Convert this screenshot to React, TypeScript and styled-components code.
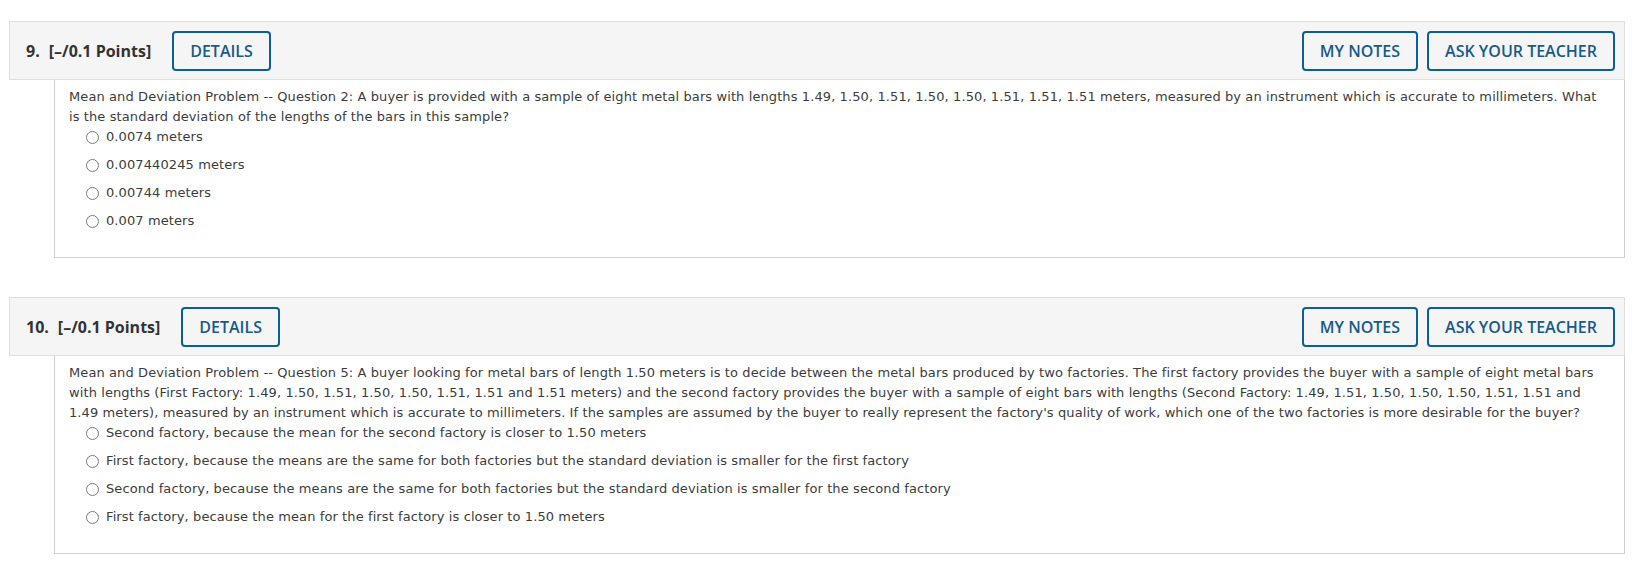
import React from "react";
import styled, { createGlobalStyle } from "styled-components";

interface Question {
  number: number;
  points: string;
  text: string;
  options: string[];
}

const questions: Question[] = [
  {
    number: 9,
    points: "[–/0.1 Points]",
    text: "Mean and Deviation Problem -- Question 2: A buyer is provided with a sample of eight metal bars with lengths 1.49, 1.50, 1.51, 1.50, 1.50, 1.51, 1.51, 1.51 meters, measured by an instrument which is accurate to millimeters. What is the standard deviation of the lengths of the bars in this sample?",
    options: ["0.0074 meters", "0.007440245 meters", "0.00744 meters", "0.007 meters"],
  },
  {
    number: 10,
    points: "[–/0.1 Points]",
    text: "Mean and Deviation Problem -- Question 5: A buyer looking for metal bars of length 1.50 meters is to decide between the metal bars produced by two factories. The first factory provides the buyer with a sample of eight metal bars with lengths (First Factory: 1.49, 1.50, 1.51, 1.50, 1.50, 1.51, 1.51 and 1.51 meters) and the second factory provides the buyer with a sample of eight bars with lengths (Second Factory: 1.49, 1.51, 1.50, 1.50, 1.50, 1.51, 1.51 and 1.49 meters), measured by an instrument which is accurate to millimeters. If the samples are assumed by the buyer to really represent the factory's quality of work, which one of the two factories is more desirable for the buyer?",
    options: [
      "Second factory, because the mean for the second factory is closer to 1.50 meters",
      "First factory, because the means are the same for both factories but the standard deviation is smaller for the first factory",
      "Second factory, because the means are the same for both factories but the standard deviation is smaller for the second factory",
      "First factory, because the mean for the first factory is closer to 1.50 meters",
    ],
  },
];

const GlobalStyle = createGlobalStyle`
  body {
    margin: 0;
    background: #ffffff;
  }
`;

const Page = styled.div`
  padding: 21px 14px 0 9px;
`;

const Block = styled.section`
  margin-bottom: 39px;
`;

const Header = styled.div`
  display: flex;
  align-items: center;
  height: 59px;
  box-sizing: border-box;
  padding: 0 9px 0 16px;
  background: #f5f5f5;
  border: 1px solid #dedede;
  font-family: "Open Sans", "Liberation Sans", sans-serif;
`;

const Title = styled.span`
  font-size: 16px;
  font-weight: 700;
  color: #333333;
  margin-right: 9px;
`;

const Points = styled.span`
  font-size: 16px;
  font-weight: 700;
  color: #333333;
  margin-right: 21px;
`;

const Actions = styled.div`
  display: flex;
  gap: 9px;
  margin-left: auto;
`;

const OutlineButton = styled.button`
  height: 40px;
  padding: 0 16px;
  background: transparent;
  border: 2px solid #0b5f97;
  border-radius: 4px;
  color: #185b88;
  font-family: "Open Sans", "Liberation Sans", sans-serif;
  font-size: 16px;
  font-weight: 600;
  cursor: pointer;
`;

const Body = styled.div`
  margin-left: 45px;
  padding: 7px 15px 26px 14px;
  border: 1px solid #cfcfcf;
  border-top: none;
  font-family: "DejaVu Sans", Verdana, sans-serif;
  font-size: 13px;
  letter-spacing: 0.1px;
  line-height: 20px;
  color: #3c3c3c;
`;

const Prompt = styled.div``;

const OptionList = styled.ul`
  list-style: none;
  margin: 0;
  padding: 0 0 0 17px;
  display: flex;
  flex-direction: column;
  gap: 8px;
`;

const OptionRow = styled.li`
  display: flex;
  align-items: center;
  gap: 7px;
`;

const Radio = styled.span`
  width: 11px;
  height: 11px;
  border: 1px solid #7a7a7a;
  border-radius: 50%;
  background: #ffffff;
  flex: none;
`;

const QuestionBlock: React.FC<{ q: Question }> = ({ q }) => (
  <Block>
    <Header>
      <Title>{q.number}.</Title>
      <Points>{q.points}</Points>
      <OutlineButton>DETAILS</OutlineButton>
      <Actions>
        <OutlineButton>MY NOTES</OutlineButton>
        <OutlineButton>ASK YOUR TEACHER</OutlineButton>
      </Actions>
    </Header>
    <Body>
      <Prompt>{q.text}</Prompt>
      <OptionList>
        {q.options.map((opt, i) => (
          <OptionRow key={i}>
            <Radio />
            {opt}
          </OptionRow>
        ))}
      </OptionList>
    </Body>
  </Block>
);

export default function App() {
  return (
    <>
      <GlobalStyle />
      <Page>
        {questions.map((q) => (
          <QuestionBlock key={q.number} q={q} />
        ))}
      </Page>
    </>
  );
}
